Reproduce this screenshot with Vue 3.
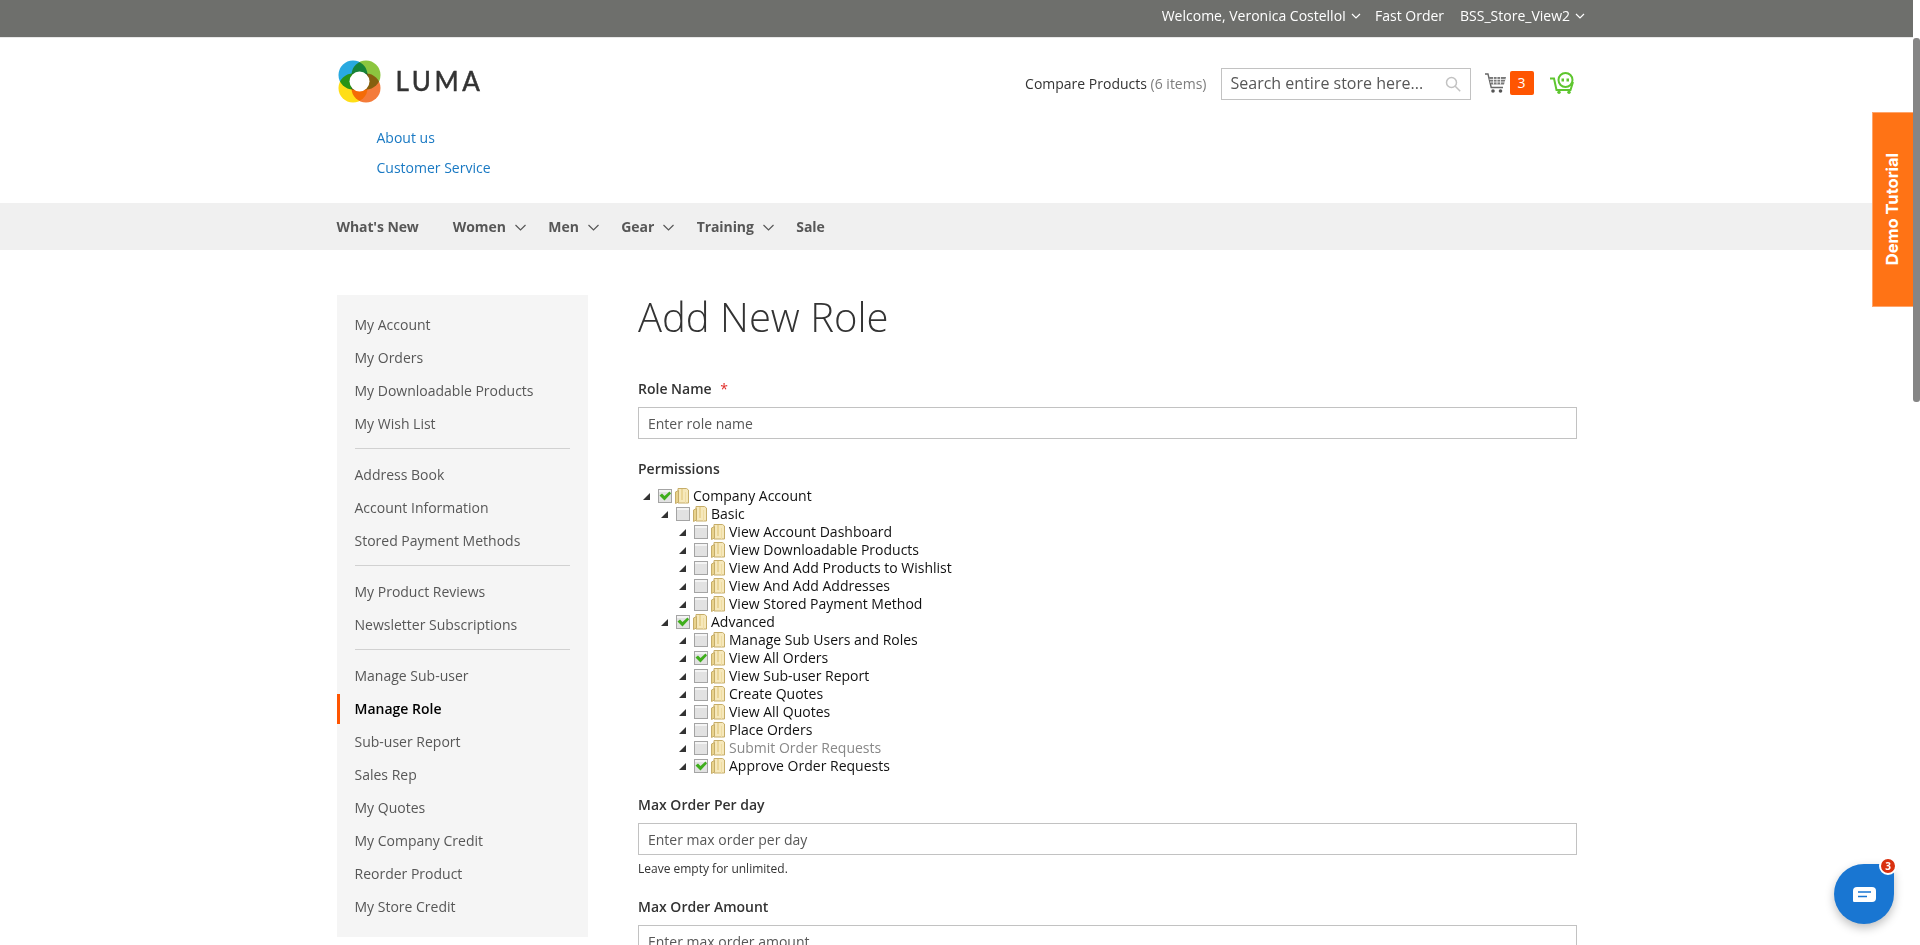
<script setup>
const nav = [
  { t: "What's New" }, { t: 'Women', c: true }, { t: 'Men', c: true },
  { t: 'Gear', c: true }, { t: 'Training', c: true }, { t: 'Sale' }
]
const groups = [
  ['My Account', 'My Orders', 'My Downloadable Products', 'My Wish List'],
  ['Address Book', 'Account Information', 'Stored Payment Methods'],
  ['My Product Reviews', 'Newsletter Subscriptions'],
  ['Manage Sub-user', 'Manage Role', 'Sub-user Report', 'Sales Rep', 'My Quotes', 'My Company Credit', 'Reorder Product', 'My Store Credit']
]
const tree = [
  { t: 'Company Account', l: 0, on: true },
  { t: 'Basic', l: 1 },
  { t: 'View Account Dashboard', l: 2 },
  { t: 'View Downloadable Products', l: 2 },
  { t: 'View And Add Products to Wishlist', l: 2 },
  { t: 'View And Add Addresses', l: 2 },
  { t: 'View Stored Payment Method', l: 2 },
  { t: 'Advanced', l: 1, on: true },
  { t: 'Manage Sub Users and Roles', l: 2 },
  { t: 'View All Orders', l: 2, on: true },
  { t: 'View Sub-user Report', l: 2 },
  { t: 'Create Quotes', l: 2 },
  { t: 'View All Quotes', l: 2 },
  { t: 'Place Orders', l: 2 },
  { t: 'Submit Order Requests', l: 2, off: true },
  { t: 'Approve Order Requests', l: 2, on: true }
]
</script>

<template>
  <div class="page">
    <div class="topbar">
      <div class="wrap topbar-in">
        <span class="top-item">Welcome, Veronica CostelloI
          <svg class="top-chev" viewBox="0 0 10 6"><path d="M1 1l4 4 4-4" /></svg>
        </span>
        <span class="top-item">Fast Order</span>
        <span class="top-item">BSS_Store_View2
          <svg class="top-chev" viewBox="0 0 10 6"><path d="M1 1l4 4 4-4" /></svg>
        </span>
      </div>
    </div>

    <header class="wrap header">
      <div class="header-row">
        <div class="logo">
          <svg class="logo-mark" viewBox="0 0 43 43">
            <g class="petals">
              <circle cx="15" cy="15" r="14.500" fill="#29a9e0" />
              <circle cx="28" cy="15" r="14.500" fill="#8cc63f" />
              <circle cx="15" cy="28" r="14.500" fill="#ffde17" />
              <circle cx="28" cy="28" r="14.500" fill="#f47b3a" />
            </g>
            <circle cx="21.500" cy="21.500" r="10" fill="#fff" />
          </svg>
          <span class="logo-text">LUMA</span>
        </div>
        <div class="tools">
          <span class="compare">Compare Products <span class="count">(6 items)</span></span>
          <div class="search">
            <span class="search-ph">Search entire store here...</span>
            <svg class="search-ico" viewBox="0 0 16 16"><circle cx="6.500" cy="6.500" r="5" /><path d="M10.200 10.200l5 5" /></svg>
          </div>
          <svg class="cart" viewBox="0 0 21 20">
            <path d="M0 1h3l3.200 13.500H18" fill="none" stroke="#666" stroke-width="1.400" />
            <path d="M4 4h17l-2 7.500H6z" fill="#787878" />
            <path d="M4.500 6.400h16M5 9h15M8.500 4v7.500M12 4v7.500M15.500 4v7.500" stroke="#fff" stroke-width=".8" />
            <circle cx="8" cy="18" r="1.800" fill="#555" />
            <circle cx="15.500" cy="18" r="1.800" fill="#555" />
          </svg>
          <span class="badge">3</span>
          <svg class="quote" viewBox="0 0 25 22">
            <g fill="none" stroke="#5ec62f" stroke-width="2">
              <path d="M0 6.500h4l2.500 11.500h14l2.500-8" />
              <circle cx="15.500" cy="8" r="7" />
            </g>
            <path d="M11.500 6.500h2.500v3h-2.500zM16.500 6.500h2.500v3h-2.500z" fill="#5ec62f" />
            <circle cx="9" cy="20.300" r="1.700" fill="#5ec62f" />
            <circle cx="19" cy="20.300" r="1.700" fill="#5ec62f" />
          </svg>
        </div>
      </div>
      <div class="links">
        <a>About us</a>
        <a>Customer Service</a>
      </div>
    </header>

    <nav class="navbar">
      <div class="wrap nav-in">
        <span v-for="n in nav" :key="n.t" class="nav-item">
          {{ n.t }}
          <svg v-if="n.c" class="nav-chev" viewBox="0 0 11 7"><path d="M.5 1l5 5 5-5" /></svg>
        </span>
      </div>
    </nav>

    <div class="wrap columns">
      <aside class="side">
        <template v-for="(g, i) in groups" :key="i">
          <div v-if="i" class="side-div"></div>
          <div v-for="s in g" :key="s" class="side-item" :class="{ active: s === 'Manage Role' }">{{ s }}</div>
        </template>
      </aside>

      <main class="main">
        <h1 class="title">Add New Role</h1>

        <div class="label first">Role Name <span class="req">*</span></div>
        <div class="input">Enter role name</div>

        <div class="label">Permissions</div>
        <div class="tree">
          <div v-for="r in tree" :key="r.t" class="row" :class="['lvl' + r.l, { disabled: r.off }]">
            <svg class="arrow" viewBox="0 0 7 7"><path d="M7 0v7H0z" /></svg>
            <svg class="check" viewBox="0 0 14 14">
              <rect x=".5" y=".5" width="13" height="13" fill="#e2e2e2" stroke="#a4a4a4" />
              <rect x="1" y="1" width="12" height="2" fill="#f4f4f4" />
              <path v-if="r.on" d="M1.500 6.500l2.500-2 2.500 2.500 5-4.500 1.500 2-6.500 7z" fill="#3fae1c" />
            </svg>
            <svg class="folder" viewBox="0 0 14 16">
              <path d="M3 .5h8.500l2 1.500v13H3z" fill="#f6e8bb" stroke="#c6ad68" />
              <path d="M.5 4l3-1.500V14l-3 1.500z" fill="#e8d28c" stroke="#c6ad68" />
              <path d="M7 1v11" stroke="#e6cf8a" stroke-width="1.500" />
              <path d="M10.500 4v11" stroke="#efdca2" />
            </svg>
            <span>{{ r.t }}</span>
          </div>
        </div>

        <div class="label">Max Order Per day</div>
        <div class="input">Enter max order per day</div>
        <div class="hint">Leave empty for unlimited.</div>

        <div class="label">Max Order Amount</div>
        <div class="input">Enter max order amount</div>
      </main>
    </div>

    <div class="demo"><span>Demo Tutorial</span></div>
    <div class="chat">
      <svg class="chat-ico" viewBox="0 0 23 15">
        <path d="M4 0h15a4 4 0 0 1 4 4v7a4 4 0 0 1-4 4H1c-1 0-1-1-1-2V4a4 4 0 0 1 4-4z" fill="#fff" />
        <path d="M5 5h13M5 9.500h9" stroke="#1976d2" stroke-width="1.700" />
      </svg>
      <span class="chat-badge">3</span>
    </div>
  </div>
  <div class="scroll-thumb"></div>
</template>

<style>
html, body { margin: 0; overflow: hidden; background: #fff; }
</style>

<style scoped>
.page {
  width: calc(100vw - 7px);
  height: 945px;
  overflow: hidden;
  font-family: "Open Sans", sans-serif;
  font-size: 14px;
  color: #333;
  background: #fff;
}
.wrap { max-width: 1240px; margin: 0 auto; padding: 0 20px; }

.topbar { height: 37px; background: #6e6f6c; border-bottom: 1px solid #e8e8e8; color: #fff; }
.topbar-in { display: flex; justify-content: flex-end; align-items: center; height: 31px; gap: 16px; }
.top-item { display: flex; align-items: center; gap: 5px; line-height: 20px; }
.top-item:first-child { margin-right: -2px; }
.top-item:last-child { margin-right: -8.500px; }
.top-chev { width: 10px; height: 6px; fill: none; stroke: #fff; stroke-width: 1.200; }

.header-row { display: flex; justify-content: space-between; align-items: flex-start; padding-top: 22px; }
.logo { display: flex; align-items: center; gap: 15px; height: 43px; margin-left: 1px; }
.logo-mark { width: 43px; height: 43px; }
.petals circle { mix-blend-mode: multiply; }
.logo-text { font-family: Lato, sans-serif; font-size: 26px; letter-spacing: 3.600px; color: #333; line-height: 1; -webkit-text-stroke: .5px #333; padding-bottom: 2px; }
.tools { display: flex; align-items: center; height: 32px; margin-top: 8px; padding-right: 2px; }
.compare { color: #333; margin-right: 14px; padding-bottom: 2px; }
.count { color: #7d7d7d; }
.search { width: 250px; height: 32px; box-sizing: border-box; border: 1px solid #c2c2c2; display: flex; align-items: center; justify-content: space-between; padding: 0 9px; margin-right: 14px; }
.search-ph { font-size: 16px; color: #575757; padding-bottom: 2px; }
.search-ico { width: 16px; height: 16px; fill: none; stroke: #c2c2c2; stroke-width: 1.500; }
.cart { width: 21px; height: 20px; margin-right: 4px; margin-bottom: 2px; }
.badge { width: 24px; height: 24px; background: #ff5501; border-radius: 2px; color: #fff; text-align: center; line-height: 24px; margin-right: 16px; margin-bottom: 2px; }
.quote { width: 25px; height: 22px; margin-bottom: 2px; }

.links { display: flex; flex-direction: column; gap: 10px; margin-top: 25px; padding-left: 40px; padding-bottom: 25px; line-height: 20px; }
.links a { color: #1979c3; }

.navbar { height: 47px; background: #f0f0f0; }
.nav-in { display: flex; align-items: center; height: 47px; gap: 22.600px; }
.nav-item { display: flex; align-items: center; gap: 9px; font-weight: 700; color: #575757; letter-spacing: -.1px; }
.nav-item:first-child { margin-right: 11.500px; }
.nav-chev { width: 11px; height: 7px; fill: none; stroke: #575757; stroke-width: 1.200; margin-top: 2px; }

.columns { display: flex; gap: 50px; padding-top: 45px; }
.side { width: 251.500px; flex: none; background: #f5f5f5; padding: 13px 0 14px; height: 642px; box-sizing: border-box; }
.side-item { height: 33px; line-height: 33px; padding-left: 18px; color: #575757; }
.side-item.active { color: #000; font-weight: 600; position: relative; }
.side-item.active::before { content: ""; position: absolute; left: 0; top: 1.500px; width: 3px; height: 30px; background: #ff5501; }
.side-div { height: 1px; background: #d1d1d1; margin: 8px 18px 9px; }

.main { flex: 1; min-width: 0; }
.title { margin: 0; font-size: 40px; font-weight: 300; line-height: 44px; color: #333; }
.label { font-weight: 600; line-height: 20px; margin-top: 20px; margin-bottom: 8px; color: #333; }
.label.first { margin-top: 40px; margin-bottom: 8px; }
.req { color: #e02b27; margin-left: 5px; font-weight: 400; }
.input { height: 32px; box-sizing: border-box; border: 1px solid #c2c2c2; padding: 0 9px; line-height: 32px; color: #575757; }
.hint { font-size: 12px; line-height: 16px; margin-top: 6px; color: #333; }

.tree { color: #111; }
.row { display: flex; align-items: center; height: 18px; line-height: 18px; white-space: nowrap; }
.lvl0 { padding-left: 5px; }
.lvl1 { padding-left: 23px; }
.lvl2 { padding-left: 41px; }
.disabled { color: #888; }
.arrow { width: 7px; height: 7px; fill: #333; margin-right: 8px; flex: none; }
.check { width: 14px; height: 14px; margin-right: 3px; flex: none; }
.folder { width: 14px; height: 16px; margin-right: 4px; flex: none; }

.demo { position: fixed; top: 112px; right: 7px; width: 41px; height: 195px; box-sizing: border-box; border: 1px solid #ffa56b; border-right: 0; background: #ff7315; display: flex; align-items: center; justify-content: center; color: #fff; }
.demo span { writing-mode: vertical-rl; transform: rotate(180deg); font-family: Inter, sans-serif; font-weight: 700; font-size: 16.500px; white-space: nowrap; margin-right: 2px; }

.chat { position: fixed; right: 26px; bottom: 21px; width: 60px; height: 60px; background: #1976d2; border-radius: 30px 10px 30px 30px; box-shadow: 0 4px 10px rgba(0, 0, 0, .25); display: flex; align-items: center; justify-content: center; }
.chat-ico { width: 23px; height: 15px; }
.chat-badge { position: absolute; top: -7px; right: -3px; width: 14px; height: 14px; border: 2px solid #fff; border-radius: 50%; background: #d9300f; color: #fff; font: 700 10px/14px "Open Sans", sans-serif; text-align: center; }

.scroll-thumb { position: fixed; top: 38px; right: 0; width: 7px; height: 364px; background: #858585; border-radius: 3px; }
</style>
